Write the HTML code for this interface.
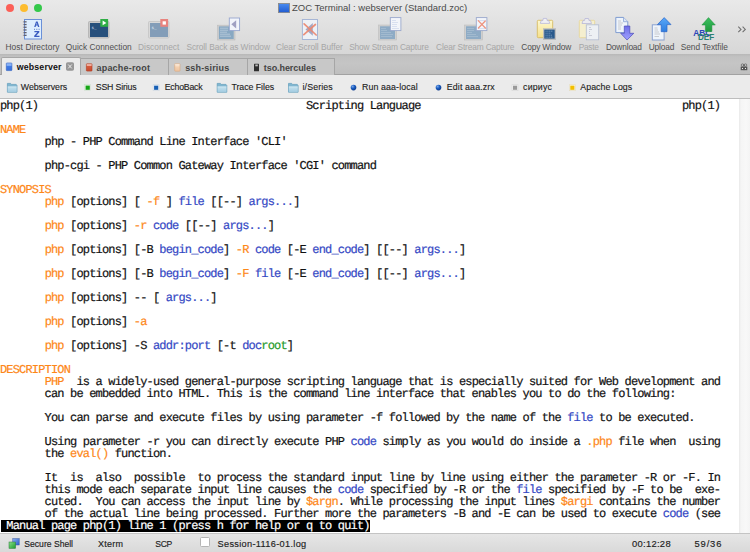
<!DOCTYPE html>
<html><head><meta charset="utf-8">
<style>
*{margin:0;padding:0;box-sizing:border-box}
html,body{width:750px;height:552px;overflow:hidden;background:#fff}
body{position:relative;font-family:"Liberation Sans",sans-serif}
.abs{position:absolute}
#top{position:absolute;left:0;top:0;width:750px;height:54px;background:linear-gradient(#e9e9e9,#d7d7d7)}
.tl{position:absolute;top:3.5px;width:8.5px;height:8.5px;border-radius:50%}
#title{position:absolute;left:292px;top:2px;font-size:9.5px;color:#4a4a4a;white-space:nowrap;line-height:12px}
.lbl{position:absolute;top:41.8px;font-size:8.35px;line-height:10px;white-space:nowrap;color:#505050;transform:translateX(-50%)}
.dis{color:#a6a6a6}
#tabbar{position:absolute;left:0;top:54px;width:750px;height:21px;background:linear-gradient(#b8b8b8 0,#c2c2c2 3px,#c5c5c5 9px,#bfbfbf 100%);border-bottom:1px solid #a2a2a2}
.tab{position:absolute;top:58px;height:17px;background:#c8c8c8;border:1px solid #a6a6a6;border-bottom:none;font-weight:bold;font-size:9.1px;color:#444;white-space:nowrap;line-height:17px;padding-top:1px}
#bm{position:absolute;left:0;top:75px;width:750px;height:24px;background:#ebebeb;border-bottom:1px solid #bdbdbd}
.bmt{position:absolute;top:82px;font-size:8.8px;line-height:11px;color:#1c1c1c;white-space:nowrap;-webkit-text-stroke:0.12px #1c1c1c}
#term{position:absolute;left:0;top:99px;width:739px;height:433px;background:#fff}
#sb{position:absolute;left:739px;top:99px;width:11px;height:434px;background:linear-gradient(90deg,#e9e9e9 0,#f5f5f5 2px,#f8f8f8 7px,#f4f4f4 11px)}
.r{position:absolute;left:0;height:12px;line-height:14px;font-family:"Liberation Mono",monospace;font-size:12px;letter-spacing:-0.828px;white-space:pre;color:#111;-webkit-text-stroke:0.2px currentColor;text-rendering:geometricPrecision}
.r span.o{color:#fd8718}
.r span.b{color:#3448c4}
.r span.g{color:#1f9a2a}
.r span.w{color:#fff}
#status{position:absolute;left:0;top:533px;width:750px;height:19px;background:linear-gradient(#e6e6e6,#d9d9d9);border-top:1px solid #c4c4c4}
.st{position:absolute;top:539px;font-size:8.6px;line-height:10px;color:#222;white-space:nowrap;-webkit-text-stroke:0.15px #222}
</style></head><body>
<div id="top"></div>
<div class="tl" style="left:5.5px;background:#fc5f57"></div>
<div class="tl" style="left:19.7px;background:#fdbc2e"></div>
<div class="tl" style="left:33.8px;background:#34c84a"></div>
<svg class="abs" style="left:278px;top:3px" width="12" height="10"><defs><linearGradient id="ti" x1="0" y1="0" x2="0" y2="1"><stop offset="0" stop-color="#4a8cf0"/><stop offset="1" stop-color="#1f5ad0"/></linearGradient></defs><rect x="0.5" y="0.5" width="11" height="9.2" fill="url(#ti)" stroke="#8a8a8a" stroke-width="0.9"/></svg>
<div id="title">ZOC Terminal : webserver (Standard.zoc)</div>
<svg class="abs" style="left:0;top:0" width="750" height="54" viewBox="0 0 750 54">
<defs>
<linearGradient id="gy" x1="0" y1="0" x2="0" y2="1"><stop offset="0" stop-color="#fdf8d0"/><stop offset="1" stop-color="#f6e08a"/></linearGradient>
<linearGradient id="gdn" x1="0" y1="0" x2="0" y2="1"><stop offset="0" stop-color="#6e6ee8"/><stop offset="1" stop-color="#a0a0ff"/></linearGradient>
<linearGradient id="gup" x1="0" y1="0" x2="0" y2="1"><stop offset="0" stop-color="#5aa8f8"/><stop offset="1" stop-color="#2f7ee0"/></linearGradient>
<linearGradient id="ggr" x1="0" y1="0" x2="0" y2="1"><stop offset="0" stop-color="#3cc060"/><stop offset="1" stop-color="#1e9a3c"/></linearGradient>
</defs>
<!-- Host Directory -->
<rect x="24.5" y="19.5" width="17" height="19.5" fill="#deeefe" stroke="#6a90d8" stroke-width="1"/>
<g><rect x="23.6" y="21.2" width="3" height="1.3" fill="#606070"/><rect x="22.9" y="21.4" width="0.8" height="0.8" fill="#9a9aa8"/><rect x="23.6" y="23.9" width="3" height="1.3" fill="#606070"/><rect x="22.9" y="24.1" width="0.8" height="0.8" fill="#9a9aa8"/><rect x="23.6" y="26.6" width="3" height="1.3" fill="#606070"/><rect x="22.9" y="26.9" width="0.8" height="0.8" fill="#9a9aa8"/><rect x="23.6" y="29.3" width="3" height="1.3" fill="#606070"/><rect x="22.9" y="29.6" width="0.8" height="0.8" fill="#9a9aa8"/><rect x="23.6" y="32.0" width="3" height="1.3" fill="#606070"/><rect x="22.9" y="32.2" width="0.8" height="0.8" fill="#9a9aa8"/><rect x="23.6" y="34.7" width="3" height="1.3" fill="#606070"/><rect x="22.9" y="35.0" width="0.8" height="0.8" fill="#9a9aa8"/></g>
<path d="M34.2 27 L36 21.5 L37.6 21.5 L39.4 27 L38 27 L37.6 25.6 L36 25.6 L35.6 27 Z M36.3 24.5 L37.3 24.5 L36.8 22.8 Z" fill="#3a5cc0"/>
<g fill="#5a78c8"><rect x="34" y="28.8" width="1" height="1"/><rect x="36.3" y="28.8" width="1" height="1"/><rect x="38.6" y="28.8" width="1" height="1"/></g>
<path d="M34.4 31 L39.3 31 L39.3 32.2 L36.2 35.8 L39.5 35.8 L39.5 37 L34.2 37 L34.2 35.8 L37.3 32.2 L34.4 32.2 Z" fill="#3a5cc0"/>
<!-- Quick Connection -->
<rect x="88.5" y="21.5" width="20.5" height="16.5" rx="1" fill="#c9c9c9" stroke="#b0b0b0" stroke-width="0.8"/>
<rect x="90" y="23" width="18" height="14" fill="#27507c"/>
<text x="91.5" y="28.5" font-family="Liberation Mono" font-size="4.3" fill="#c8d4e0">$_</text>
<rect x="100.3" y="19" width="7.8" height="7.8" fill="#2fae45"/>
<path d="M102.6 20.6 L106.4 22.9 L102.6 25.2 Z" fill="#fff"/>
<!-- Disconnect -->
<rect x="148.5" y="21.5" width="20.5" height="16.5" rx="1" fill="#d9d9d9" stroke="#c4c4c4" stroke-width="0.8"/>
<rect x="150" y="23" width="18" height="14" fill="#839db8"/>
<text x="151.5" y="28.5" font-family="Liberation Mono" font-size="4.3" fill="#dfe6ee">$_</text>
<rect x="160.3" y="19" width="7.8" height="7.8" fill="#e8837e"/>
<rect x="162.6" y="21.3" width="3.3" height="3.3" fill="#fff"/>
<!-- Scroll Back -->
<rect x="217.5" y="25.2" width="17.5" height="14.8" fill="#cdcdcd" stroke="#bdbdbd" stroke-width="0.6"/>
<rect x="218.9" y="26.4" width="14.8" height="12.6" fill="#88a8c2"/>
<g stroke="#d4e0ea" stroke-width="0.55"><line x1="220" y1="28.2" x2="228" y2="28.2"/><line x1="220" y1="30.2" x2="228" y2="30.2"/><line x1="220" y1="32.2" x2="227" y2="32.2"/><line x1="220" y1="34.2" x2="230" y2="34.2"/><line x1="220" y1="36.2" x2="231" y2="36.2"/></g>
<rect x="229.3" y="18" width="10.3" height="12.6" fill="#f2f4fa" stroke="#97a6cf" stroke-width="0.9"/>
<path d="M231.3 24.3 L236.2 20.2 L236.2 28.4 Z" fill="#a0a0c2"/>
<!-- Clear Scroll Buffer -->
<rect x="302.4" y="19.5" width="15.1" height="20" fill="#eef1f6" stroke="#a6b6d6" stroke-width="1"/>
<path d="M305.5 29.4 L312.8 23 L312.8 35.8 Z" fill="#a4a8c4"/>
<path d="M304.1 23.8 L316.2 35 M315.4 24.5 L303.8 34.6" stroke="#ec8870" stroke-opacity="0.92" stroke-width="1.7" stroke-linecap="round"/>
<!-- Show Stream Capture -->
<rect x="378.3" y="25" width="18.4" height="15" fill="#cfcfcf" stroke="#c0c0c0" stroke-width="0.6"/>
<rect x="380" y="26.3" width="15" height="12.7" fill="#8eabc5"/>
<g stroke="#bccddc" stroke-width="0.45"><line x1="381" y1="28.5" x2="386" y2="28.5"/><line x1="381" y1="30.5" x2="387" y2="30.5"/><line x1="381" y1="32.5" x2="391" y2="32.5"/><line x1="381" y1="34.5" x2="393" y2="34.5"/><line x1="381" y1="36.5" x2="392" y2="36.5"/></g>
<rect x="390.3" y="17.6" width="10.6" height="13" fill="#f3f5fa" stroke="#9aa8cc" stroke-width="0.9"/>
<g stroke="#b0c0e0" stroke-width="0.4"><line x1="392" y1="20.5" x2="396" y2="20.5"/><line x1="392" y1="22.5" x2="398" y2="22.5"/><line x1="392" y1="24.5" x2="397" y2="24.5"/><line x1="392" y1="26.5" x2="397" y2="26.5"/><line x1="392" y1="28.5" x2="399" y2="28.5"/></g>
<!-- Clear Stream Capture -->
<rect x="464.3" y="25" width="18.4" height="15" fill="#cfcfcf" stroke="#c0c0c0" stroke-width="0.6"/>
<rect x="466" y="26.3" width="15" height="12.7" fill="#8eabc5"/>
<g stroke="#bccddc" stroke-width="0.45"><line x1="467" y1="28.5" x2="474" y2="28.5"/><line x1="467" y1="30.5" x2="474" y2="30.5"/><line x1="467" y1="32.5" x2="472" y2="32.5"/><line x1="467" y1="34.5" x2="476" y2="34.5"/><line x1="467" y1="36.5" x2="478" y2="36.5"/></g>
<rect x="476.3" y="17.6" width="10.6" height="13" fill="#f3f5fa" stroke="#9aa8cc" stroke-width="0.9"/>
<g stroke="#b0c0e0" stroke-width="0.4"><line x1="478" y1="20.5" x2="485" y2="20.5"/><line x1="478" y1="28.5" x2="485" y2="28.5"/></g><path d="M478.2 20.6 L485.6 28.2 M485.3 21 L478.4 28" stroke="#ec8a72" stroke-opacity="0.9" stroke-width="1.25" stroke-linecap="round"/>
<!-- Copy Window -->
<rect x="537.3" y="20.3" width="15.4" height="17.4" rx="1" fill="url(#gy)" stroke="#d7bb62" stroke-width="0.9"/>
<path d="M540.3 23.4 L541.2 20.6 L542.8 20.6 L543.4 18.4 L546.6 18.4 L547.2 20.6 L548.8 20.6 L549.7 23.4 Z" fill="#f0f0f4" stroke="#b0b0d8" stroke-width="0.7"/>
<rect x="543" y="28.2" width="13" height="11.8" fill="#bdbdbd"/>
<rect x="544.3" y="29.6" width="10.4" height="9" fill="#2a5a8c"/>
<g stroke="#9cb8d8" stroke-width="0.6" stroke-dasharray="1.2 0.6"><line x1="545.5" y1="31.2" x2="553" y2="31.2"/><line x1="545.5" y1="33.2" x2="551" y2="33.2"/><line x1="545.5" y1="35.2" x2="552" y2="35.2"/><line x1="545.5" y1="37.2" x2="553" y2="37.2"/></g>
<!-- Paste -->
<rect x="579.3" y="20.3" width="15.4" height="17.4" rx="1" fill="#f5efcf" stroke="#e6d79c" stroke-width="0.9"/>
<path d="M582 23.5 L583 20.5 L584.5 20.5 L585 18.5 L588.5 18.5 L589 20.5 L590.5 20.5 L591.5 23.5 Z" fill="#ececf0" stroke="#b8b8d8" stroke-width="0.8"/>
<rect x="586.3" y="24.8" width="12.4" height="15" fill="#edf0f4" stroke="#b8c0d2" stroke-width="0.9"/>
<g stroke="#a8a8b8" stroke-width="0.5"><line x1="589" y1="27.5" x2="591" y2="27.5"/><line x1="589" y1="29.5" x2="592" y2="29.5"/><line x1="589" y1="31.5" x2="590" y2="31.5"/><line x1="589" y1="33.5" x2="590" y2="33.5"/><line x1="589" y1="35.5" x2="592" y2="35.5"/></g>
<!-- Download -->
<path d="M615.8 17.4 L623.5 17.4 L627.8 21.7 L627.8 32.6 L615.8 32.6 Z" fill="#eef4fb" stroke="#7f9cd0" stroke-width="1"/>
<path d="M623.5 17.4 L623.5 21.7 L627.8 21.7" fill="#dde6f8" stroke="#7f9cd0" stroke-width="0.7"/>
<g stroke="#a0a0a0" stroke-width="0.5"><line x1="618" y1="21" x2="621" y2="21"/><line x1="618" y1="23" x2="623" y2="23"/><line x1="618" y1="25" x2="622" y2="25"/><line x1="618" y1="27" x2="621" y2="27"/><line x1="618" y1="29" x2="621" y2="29"/></g>
<path d="M624.3 26 L629.8 26 L629.8 33.3 L633.8 33.3 L627.05 40 L620.7 33.3 L624.3 33.3 Z" fill="url(#gdn)" stroke="#4a4ab8" stroke-width="0.7"/>
<!-- Upload -->
<rect x="652.3" y="24.8" width="11.8" height="15.2" fill="#eef4fb" stroke="#8aa2d0" stroke-width="1"/>
<g stroke="#a0a0a0" stroke-width="0.5"><line x1="654.5" y1="28" x2="657.5" y2="28"/><line x1="654.5" y1="30" x2="658" y2="30"/><line x1="654.5" y1="32" x2="659" y2="32"/><line x1="654.5" y1="34" x2="660" y2="34"/><line x1="654.5" y1="36.5" x2="659" y2="36.5"/></g>
<path d="M664.2 17.6 L671 24.6 L667 24.6 L667 31.7 L661.2 31.7 L661.2 24.6 L657.4 24.6 Z" fill="url(#gup)" stroke="#2a64c8" stroke-width="0.7"/>
<!-- Send Textfile -->
<text x="693.2" y="35.9" font-family="Liberation Sans" font-weight="bold" font-size="8.8" fill="#2a46b8" textLength="18" lengthAdjust="spacingAndGlyphs">ABC</text>
<path d="M708.5 17.6 L715.3 25 L711.9 25 L711.9 31.5 L705.4 31.5 L705.4 25 L701.9 25 Z" fill="url(#ggr)" stroke="#1f8a38" stroke-width="0.5"/>
<text x="697.9" y="40.2" font-family="Liberation Sans" font-weight="bold" font-size="8.5" fill="#2a7f72" textLength="16.2" lengthAdjust="spacingAndGlyphs">DEF</text>
<path d="M738.3 26.6 L741 29.4 L738.3 32.2 M742.6 26.6 L745.3 29.4 L742.6 32.2" fill="none" stroke="#707070" stroke-width="1.1"/>
</svg>

<div class="lbl" style="left:32.54px;letter-spacing:0.085px">Host Directory</div>
<div class="lbl" style="left:98.80px;letter-spacing:-0.000px">Quick Connection</div>
<div class="lbl dis" style="left:158.70px;letter-spacing:-0.001px">Disconnect</div>
<div class="lbl dis" style="left:228.17px;letter-spacing:-0.066px">Scroll Back as Window</div>
<div class="lbl dis" style="left:309.38px;letter-spacing:-0.033px">Clear Scroll Buffer</div>
<div class="lbl dis" style="left:388.93px;letter-spacing:-0.136px">Show Stream Capture</div>
<div class="lbl dis" style="left:475.23px;letter-spacing:-0.143px">Clear Stream Capture</div>
<div class="lbl" style="left:546.22px;letter-spacing:-0.151px">Copy Window</div>
<div class="lbl dis" style="left:588.63px;letter-spacing:-0.338px">Paste</div>
<div class="lbl" style="left:623.92px;letter-spacing:-0.162px">Download</div>
<div class="lbl" style="left:661.41px;letter-spacing:-0.172px">Upload</div>
<div class="lbl" style="left:704.29px;letter-spacing:-0.030px">Send Textfile</div>
<div id="tabbar"></div>
<div id="bm"></div>
<div class="tab" style="left:80px;width:89px;padding-left:15.5px;font-size:9px;letter-spacing:0.2px">apache-root</div>
<div class="tab" style="left:168px;width:80px;padding-left:16.2px;font-size:9px;letter-spacing:0.16px">ssh-sirius</div>
<div class="tab" style="left:247px;width:88px;padding-left:15.8px;font-size:9px;letter-spacing:-0.08px">tso.hercules</div>
<div class="tab" style="left:1px;width:80px;top:57px;height:18px;border-radius:2px 2px 0 0;background:#ebebeb;color:#111;padding-left:14.8px;font-size:8.8px;letter-spacing:0.14px;line-height:17px">webserver</div>
<!--TABICONS-->
<div class="bmt" style="left:20.8px;letter-spacing:-0.038px">Webservers</div>
<div class="bmt" style="left:95.7px;letter-spacing:-0.174px">SSH Sirius</div>
<div class="bmt" style="left:164.7px;letter-spacing:-0.240px">EchoBack</div>
<div class="bmt" style="left:231.4px;letter-spacing:-0.036px">Trace Files</div>
<div class="bmt" style="left:302.5px;letter-spacing:0.120px">i/Series</div>
<div class="bmt" style="left:361.9px;letter-spacing:0.138px">Run aaa-local</div>
<div class="bmt" style="left:446.8px;letter-spacing:0.136px">Edit aaa.zrx</div>
<div class="bmt" style="left:523.1px;letter-spacing:0.179px">сириус</div>
<div class="bmt" style="left:580.3px;letter-spacing:0.057px">Apache Logs</div>
<svg class="abs" style="left:0;top:54px" width="750" height="45" viewBox="0 54 750 45">
<defs>
<linearGradient id="tb" x1="0" y1="0" x2="0" y2="1"><stop offset="0" stop-color="#9cc0fa"/><stop offset="0.36" stop-color="#7aa8f4"/><stop offset="0.37" stop-color="#3f7ce8"/><stop offset="1" stop-color="#3a6fd8"/></linearGradient>
<linearGradient id="tr" x1="0" y1="0" x2="0" y2="1"><stop offset="0" stop-color="#f6c4b6"/><stop offset="0.36" stop-color="#eea08e"/><stop offset="0.37" stop-color="#d65a3c"/><stop offset="1" stop-color="#c44a30"/></linearGradient>
<linearGradient id="tp" x1="0" y1="0" x2="0" y2="1"><stop offset="0" stop-color="#fff4ea"/><stop offset="0.45" stop-color="#f4d0b0"/><stop offset="1" stop-color="#eec4a0"/></linearGradient>
<linearGradient id="fd" x1="0" y1="0" x2="0" y2="1"><stop offset="0" stop-color="#c6e2ef"/><stop offset="1" stop-color="#a2cbe0"/></linearGradient>
<radialGradient id="bc" cx="0.35" cy="0.3" r="0.7"><stop offset="0" stop-color="#7aa8e8"/><stop offset="0.5" stop-color="#1a5cc0"/><stop offset="1" stop-color="#0f3e90"/></radialGradient>
</defs>
<!-- tab icons -->
<rect x="6.3" y="63" width="5.6" height="7.6" rx="0.6" fill="url(#tb)" stroke="#2f5fc0" stroke-width="0.6"/>
<rect x="66" y="62.2" width="8" height="8.5" rx="1.6" fill="#979797"/>
<path d="M68.2 64.5 L71.8 68.4 M71.8 64.5 L68.2 68.4" stroke="#ececec" stroke-width="1"/>
<rect x="86.4" y="63.7" width="5.6" height="7.4" rx="0.6" fill="url(#tr)" stroke="#b03a20" stroke-width="0.6"/>
<rect x="174.7" y="63.7" width="5.3" height="7.5" rx="0.6" fill="url(#tp)" stroke="#d8a880" stroke-width="0.6"/>
<rect x="254" y="63.7" width="5" height="7.5" rx="0.5" fill="#2e2e2e"/>
<rect x="255.3" y="64.5" width="2.5" height="1.8" fill="#bdbdbd"/>
<!-- grid icon -->
<g stroke="#555" stroke-width="0.8"><rect x="741.3" y="63.9" width="2.4" height="2.4" rx="1" fill="#c8c8c8" stroke="#666"/><rect x="744.3" y="63.9" width="2.4" height="2.4" rx="1" fill="#c8c8c8" stroke="#666"/><rect x="741.1" y="67" width="2.8" height="2.8" fill="#444"/><rect x="744.1" y="67" width="2.8" height="2.8" fill="#444"/></g><circle cx="742.5" cy="68.4" r="0.6" fill="#eee"/><circle cx="745.5" cy="68.4" r="0.6" fill="#eee"/><rect x="743.4" y="64.6" width="1.2" height="1.2" fill="#555"/>
<!-- bookmark icons -->
<g id="fold">
<path d="M7.4 83.4 L10.6 83.4 L11.4 84.4 L16.2 84.4 L17 85.4 L17 92.2 L7.4 92.2 Z" fill="#80b6d0" stroke="#5f9cba" stroke-width="0.7"/>
<rect x="7.7" y="86.6" width="9" height="5.4" fill="url(#fd)"/>
<path d="M7.7 86.8 L16.7 86.8" stroke="#e4f2f8" stroke-width="0.5"/>
</g>
<use href="#fold" x="209.8"/>
<use href="#fold" x="281.1"/>
<rect x="84.6" y="84.6" width="6" height="6" fill="#e6f4e6" stroke="#d0dcd0" stroke-width="0.6"/>
<rect x="85.6" y="85.6" width="4.2" height="4.2" fill="#16a516"/>
<rect x="153.1" y="84.7" width="6" height="6" fill="#e4ecf4" stroke="#d0d8e0" stroke-width="0.6"/>
<rect x="154.1" y="85.7" width="4.1" height="4.1" fill="#175fb4"/>
<circle cx="353.5" cy="87.6" r="2.8" fill="url(#bc)"/>
<circle cx="438.5" cy="87.6" r="2.8" fill="url(#bc)"/>
<rect x="512" y="84.7" width="6" height="6" fill="#f2f2f2" stroke="#d6d6d6" stroke-width="0.6"/>
<rect x="513" y="85.7" width="4.1" height="4.1" fill="#9a9a9a"/>
<rect x="569.3" y="84.7" width="6" height="6" fill="#fbf4dc" stroke="#e4dcc0" stroke-width="0.6"/>
<rect x="570.3" y="85.7" width="4.1" height="4.1" fill="#f2bf00"/>
</svg>

<div id="term">
<div class="r" style="top:0px">php(1)                                          Scripting Language                                         php(1)</div>
<div class="r" style="top:24px"><span class="o">NAME</span></div>
<div class="r" style="top:36px">       php - PHP Command Line Interface &#x27;CLI&#x27;</div>
<div class="r" style="top:60px">       php-cgi - PHP Common Gateway Interface &#x27;CGI&#x27; command</div>
<div class="r" style="top:84px"><span class="o">SYNOPSIS</span></div>
<div class="r" style="top:96px">       <span class="o">php</span> [options] [ <span class="o">-f</span> ] <span class="b">file</span> [[--] <span class="b">args...</span>]</div>
<div class="r" style="top:120px">       <span class="o">php</span> [options] <span class="o">-r</span> <span class="b">code</span> [[--] <span class="b">args...</span>]</div>
<div class="r" style="top:144px">       <span class="o">php</span> [options] [-B <span class="b">begin_code</span>] <span class="o">-R</span> <span class="b">code</span> [-E <span class="b">end_code</span>] [[--] <span class="b">args...</span>]</div>
<div class="r" style="top:168px">       <span class="o">php</span> [options] [-B <span class="b">begin_code</span>] <span class="o">-F</span> <span class="b">file</span> [-E <span class="b">end_code</span>] [[--] <span class="b">args...</span>]</div>
<div class="r" style="top:192px">       <span class="o">php</span> [options] -- [ <span class="b">args...</span>]</div>
<div class="r" style="top:216px">       <span class="o">php</span> [options] <span class="o">-a</span></div>
<div class="r" style="top:240px">       <span class="o">php</span> [options] -S <span class="b">addr:port</span> [-t <span class="b">doc</span><span class="g">root</span>]</div>
<div class="r" style="top:264px"><span class="o">DESCRIPTION</span></div>
<div class="r" style="top:276px">       <span class="o">PHP</span>  is a widely-used general-purpose scripting language that is especially suited for Web development and</div>
<div class="r" style="top:288px">       can be embedded into HTML. This is the command line interface that enables you to do the following:</div>
<div class="r" style="top:312px">       You can parse and execute files by using parameter -f followed by the name of the <span class="b">file</span> to be executed.</div>
<div class="r" style="top:336px">       Using parameter -r you can directly execute PHP <span class="b">code</span> simply as you would do inside a <span class="o">.php</span> file when  using</div>
<div class="r" style="top:348px">       the <span class="o">eval()</span> function.</div>
<div class="r" style="top:372px">       It  is  also  possible  to process the standard input line by line using either the parameter -R or -F. In</div>
<div class="r" style="top:384px">       this mode each separate input line causes the <span class="b">code</span> specified by -R or the <span class="b">file</span> specified by -F to be  exe-</div>
<div class="r" style="top:396px">       cuted.  You can access the input line by <span class="o">$argn</span>. While processing the input lines <span class="o">$argi</span> contains the number</div>
<div class="r" style="top:408px">       of the actual line being processed. Further more the parameters -B and -E can be used to execute <span class="b">code</span> (see</div>
<div class="abs" style="left:1px;top:421px;width:369px;height:12px;background:#000"></div>
<div class="r" style="top:420px"><span class="w"> Manual page php(1) line 1 (press h for help or q to quit)</span></div></div>
<div id="sb"></div>
<div id="status"></div>
<svg class="abs" style="left:0;top:532px" width="120" height="20" viewBox="0 532 120 20">
<defs>
<linearGradient id="sbg" x1="0" y1="0" x2="1" y2="1"><stop offset="0" stop-color="#8ab0f0"/><stop offset="1" stop-color="#2a5cc8"/></linearGradient>
<linearGradient id="sgg" x1="0" y1="0" x2="1" y2="1"><stop offset="0" stop-color="#8ae08a"/><stop offset="1" stop-color="#1a9a2a"/></linearGradient>
</defs>
<rect x="12.8" y="538.6" width="6.4" height="6.4" fill="url(#sbg)" stroke="#3a5aa0" stroke-width="0.5"/>
<rect x="9" y="542" width="6.6" height="6.4" fill="url(#sgg)" stroke="#2a7a3a" stroke-width="0.5"/>
</svg>

<div class="st" style="left:24.3px">Secure Shell</div>
<div class="st" style="left:97.9px;font-size:9px;letter-spacing:0.25px">Xterm</div>
<div class="st" style="left:155.3px;letter-spacing:-0.4px">SCP</div>
<div class="abs" style="left:200px;top:537px;width:9.5px;height:9.5px;background:#fff;border:1px solid #b5b5b5;border-radius:1.5px"></div>
<div class="st" style="left:217.5px;font-size:9.2px;letter-spacing:0.32px">Session-1116-01.log</div>
<div class="st" style="left:632px;font-size:9.4px;letter-spacing:0.3px;top:538.5px">00:12:28</div>
<div class="st" style="left:694.5px;font-size:9.4px;letter-spacing:0.85px;top:538.5px">59/36</div>
</body></html>
